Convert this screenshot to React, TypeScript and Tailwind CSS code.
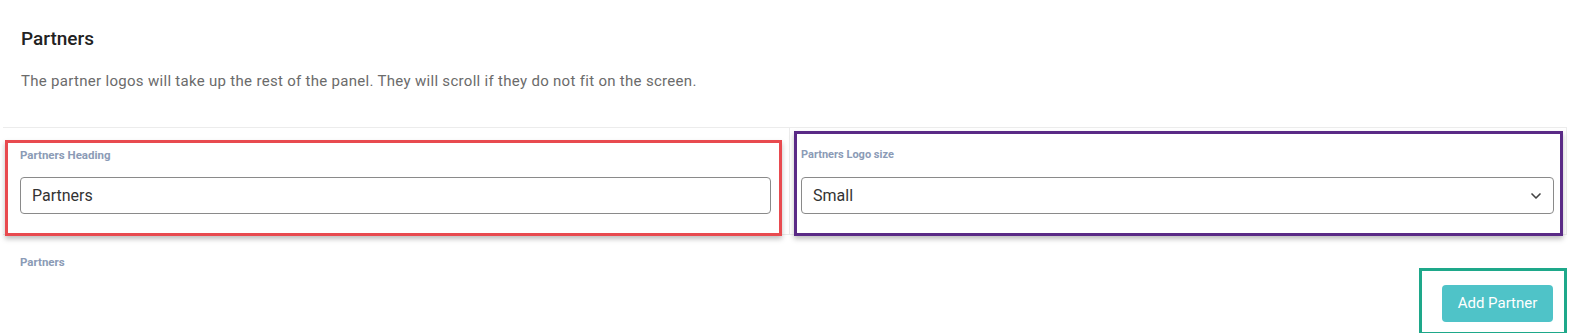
import React, { useState } from "react";
import { FiChevronDown } from "react-icons/fi";

const font = { fontFamily: "Roboto, 'Liberation Sans', sans-serif" };

const App: React.FC = () => {
  const [heading, setHeading] = useState("Partners");
  const [size, setSize] = useState("Small");

  return (
    <div className="w-[1577px] h-[333px] bg-white overflow-hidden" style={font}>
      <div className="pl-[3px] pr-[10px]">
        {/* header */}
        <div className="pl-[18px] pt-[27px] pb-[37px]">
          <h2 className="text-[19px] leading-[24px] font-medium text-[#222]">Partners</h2>
          <p className="mt-[21px] text-[15px] leading-[18px] tracking-[0.3px] text-[#6b6b6b]">
            The partner logos will take up the rest of the panel. They will scroll if they do not fit on the screen.
          </p>
        </div>

        {/* fields */}
        <div className="grid grid-cols-[787px_1fr] border-t border-b border-[#ececec] h-[108px]">
          <div className="relative border-r border-[#ececec] pl-[17px] pr-[18px] pt-[20px]">
            <div className="absolute left-[2px] right-[7px] top-[12px] h-[96px] border-[3px] border-[#e84a4f] shadow-[0_3px_5px_rgba(0,0,0,0.25)] pointer-events-none" />
            <label className="block text-[11.5px] leading-[14px] font-bold text-[#8b9bb6]">Partners Heading</label>
            <input
              value={heading}
              onChange={(e) => setHeading(e.target.value)}
              className="mt-[15px] w-full h-[37px] rounded-[4px] border border-[#8a8a8a] px-[11px] text-[16px] text-[#333] outline-none"
            />
          </div>
          <div className="relative border-r border-[#ececec] pl-[11px] pr-[12px] pt-[20px]">
            <div className="absolute left-[4px] right-[3px] top-[3px] h-[105px] border-[3px] border-[#5a2a86] shadow-[0_3px_5px_rgba(0,0,0,0.25)] pointer-events-none" />
            <label className="block text-[11px] leading-[14px] font-bold text-[#8b9bb6]">Partners Logo size</label>
            <div className="relative mt-[15px]">
              <select
                value={size}
                onChange={(e) => setSize(e.target.value)}
                className="w-full h-[37px] appearance-none rounded-[4px] border border-[#8a8a8a] bg-white px-[11px] text-[16px] text-[#333] outline-none"
              >
                <option>Small</option>
                <option>Medium</option>
                <option>Large</option>
              </select>
              <FiChevronDown className="absolute right-[10px] top-[11px] text-[16px] text-[#444] pointer-events-none" strokeWidth={2.5} />
            </div>
          </div>
        </div>

        {/* partners list */}
        <div className="pl-[17px] pt-[20px]">
          <div className="text-[11.5px] leading-[14px] font-bold text-[#8b9bb6]">Partners</div>
          <div className="flex justify-end">
            <div className="relative pt-[17px] pb-[13px] pl-[23px] pr-[14px] -mt-[1px]">
              <div className="absolute inset-0 border-[3px] border-[#1ea88a] pointer-events-none" />
              <button className="h-[37px] w-[111px] rounded-[4px] bg-[#4fc3c8] text-[15px] font-normal text-white">
                Add Partner
              </button>
            </div>
          </div>
        </div>
      </div>
    </div>
  );
};

export default App;
